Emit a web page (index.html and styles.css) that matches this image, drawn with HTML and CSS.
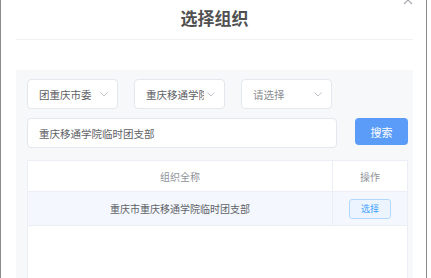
FILE: index.html
```html
<!DOCTYPE html>
<html>
    <head>
        <meta charset="UTF-8">
        <link rel="stylesheet" href="styles.css">
    </head>
    <body>
        <div class="frame">
            <span class="closeBtn">
                <svg width="10" height="10" viewBox="0 0 10 10"><path d="M1 1L9 9M9 1L1 9" stroke="#a8abb2" stroke-width="1.2" fill="none"/></svg>
            </span>
            <div class="header">
                <h2 class="title">选择组织</h2>
            </div>

            <div class="panel">
                <div class="filterRow">
                    <div class="select">
                        <span class="selectText">团重庆市委</span>
                        <svg class="arrow" width="8" height="5" viewBox="0 0 8 5"><path d="M0.5 0.5L4 4L7.5 0.5" stroke="#c0c4cc" fill="none"/></svg>
                    </div>
                    <div class="select">
                        <span class="selectText">重庆移通学院</span>
                        <svg class="arrow" width="8" height="5" viewBox="0 0 8 5"><path d="M0.5 0.5L4 4L7.5 0.5" stroke="#c0c4cc" fill="none"/></svg>
                    </div>
                    <div class="select">
                        <span class="selectText placeholder">请选择</span>
                        <svg class="arrow" width="8" height="5" viewBox="0 0 8 5"><path d="M0.5 0.5L4 4L7.5 0.5" stroke="#c0c4cc" fill="none"/></svg>
                    </div>
                </div>

                <div class="searchRow">
                    <input type="text" class="searchInput" value="重庆移通学院临时团支部">
                    <button class="btnSearch">搜索</button>
                </div>

                <div class="orgTable">
                    <div class="tableRow tableHead">
                        <div class="cellName">组织全称</div>
                        <div class="cellAction">操作</div>
                    </div>
                    <div class="tableRow tableData">
                        <div class="cellName">重庆市重庆移通学院临时团支部</div>
                        <div class="cellAction"><button class="btnPick">选择</button></div>
                    </div>
                </div>
            </div>
        </div>
    </body>
</html>
```

FILE: styles.css
```css
body {
    margin: 0;
    background: #ffffff;
    font-family: "Noto Sans CJK SC", "Liberation Sans", sans-serif;
}

.frame {
    position: relative;
    width: 425px;
    height: 278px;
    border-left: 1px solid #8c8c8c;
    border-right: 1px solid #8c8c8c;
    background: #ffffff;
    overflow: hidden;
}

.closeBtn {
    position: absolute;
    top: -5px;
    left: 402px;
    width: 10px;
    height: 10px;
}

.closeBtn svg {
    display: block;
}

.header {
    height: 39px;
    margin: 0 13px 0 15px;
    border-bottom: 1px solid #f0f1f3;
}

.title {
    margin: 0;
    line-height: 36px;
    font-size: 17px;
    font-weight: 700;
    color: #505050;
    text-align: center;
}

.panel {
    margin: 30px 13px 0 15px;
    height: 300px;
    padding: 9px 5px 0 11px;
    background: #f7f8fa;
}

.filterRow {
    display: flex;
    gap: 16px;
}

.select {
    box-sizing: border-box;
    width: 91px;
    height: 30px;
    display: flex;
    align-items: center;
    justify-content: space-between;
    padding: 0 9px 0 11px;
    background: #ffffff;
    border: 1px solid #e4e7ed;
    border-radius: 4px;
}

.selectText {
    font-size: 10.5px;
    color: #606266;
    white-space: nowrap;
    overflow: hidden;
    width: 58px;
}

.placeholder {
    color: #8a8d93;
}

.arrow {
    flex: none;
}

.searchRow {
    display: flex;
    align-items: flex-start;
    gap: 18px;
    margin-top: 9px;
}

.searchInput {
    box-sizing: border-box;
    width: 311px;
    height: 30px;
    margin: 0;
    padding: 0 11px;
    border: 1px solid #e4e7ed;
    border-radius: 4px;
    font-family: "Noto Sans CJK SC", sans-serif;
    font-size: 10.5px;
    color: #606266;
    outline: none;
}

.btnSearch {
    width: 53px;
    height: 27px;
    margin: 0;
    padding: 0;
    border: none;
    border-radius: 4px;
    background: #5a9cf8;
    color: #ffffff;
    font-family: "Noto Sans CJK SC", sans-serif;
    font-size: 11px;
}

.orgTable {
    box-sizing: border-box;
    width: 381px;
    height: 200px;
    margin-top: 12px;
    background: #ffffff;
    border: 1px solid #ebeef5;
    border-bottom: none;
}

.tableRow {
    display: flex;
    border-bottom: 1px solid #ebeef5;
    font-size: 10px;
}

.tableHead {
    height: 30px;
    color: #909399;
}

.tableData {
    height: 33px;
    background: #f4f8fe;
    color: #606266;
}

.cellName {
    width: 304px;
    display: flex;
    align-items: center;
    justify-content: center;
    border-right: 1px solid #ebeef5;
}

.cellAction {
    flex: 1;
    display: flex;
    align-items: center;
    justify-content: center;
}

.btnPick {
    width: 42px;
    height: 20px;
    margin: 0;
    padding: 0;
    border: 1px solid #b3d8ff;
    border-radius: 3px;
    background: #ecf5ff;
    color: #409eff;
    font-family: "Noto Sans CJK SC", sans-serif;
    font-size: 9px;
}
```
